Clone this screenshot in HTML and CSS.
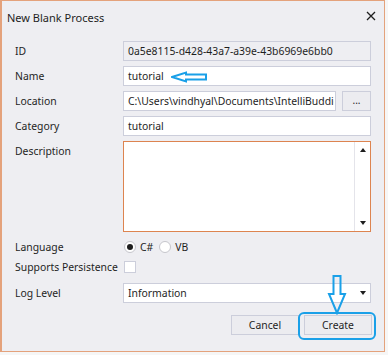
FILE: index.html
```html
<!DOCTYPE html>
<html>
<head>
<meta charset="utf-8">
<link rel="stylesheet" href="styles.css">
</head>
<body>
<div class="window">
  <div class="titlebar">
    <span class="title">New Blank Process</span>
    <svg class="close" width="10" height="10" viewBox="0 0 10 10"><path d="M1 1 L9 9 M9 1 L1 9" stroke="#1e1e1e" stroke-width="1.3"/></svg>
  </div>
  <div class="form">
    <label class="lbl">ID</label>
    <div class="field readonly">0a5e8115-d428-43a7-a39e-43b6969e6bb0</div>

    <label class="lbl">Name</label>
    <div class="field">tutorial</div>

    <label class="lbl">Location</label>
    <div class="loc">
      <div class="field grow"><span class="clip">C:\Users\vindhyal\Documents\IntelliBuddies</span></div>
      <div class="browse">...</div>
    </div>

    <label class="lbl">Category</label>
    <div class="field">tutorial</div>

    <label class="lbl top">Description</label>
    <div class="desc">
      <div class="desc-body"></div>
      <div class="scroll">
        <span class="tri up"></span>
        <span class="tri down"></span>
      </div>
    </div>

    <label class="lbl">Language</label>
    <div class="radios">
      <span class="radio checked"></span><span class="rtext">C#</span>
      <span class="radio"></span><span class="rtext">VB</span>
    </div>

    <label class="lbl persist">Supports Persistence</label>
    <div class="checkrow"><span class="check"></span></div>

    <label class="lbl">Log Level</label>
    <div class="field select">Information<span class="tri down sel"></span></div>
  </div>
  <div class="buttons">
    <div class="btn">Cancel</div>
    <div class="btn">Create</div>
  </div>

  <svg class="anno name-arrow" width="40" height="12" viewBox="0 0 40 12">
    <path d="M1 6 L15 1.5 L15 3.5 L35 3.5 L35 8.5 L15 8.5 L15 10.5 Z" fill="none" stroke="#1aa0e8" stroke-width="2" stroke-linejoin="miter"/>
  </svg>
  <svg class="anno create-arrow" width="20" height="40" viewBox="0 0 20 40">
    <path d="M6.5 1 L13.5 1 L13.5 19 L18 19 L10 38 L2 19 L6.5 19 Z" fill="none" stroke="#1aa0e8" stroke-width="2"/>
  </svg>
  <div class="anno create-ring"></div>
</div>
</body>
</html>
```

FILE: styles.css
```css
html, body {
  margin: 0;
  padding: 0;
  background: #f6f6f6;
}
body {
  font-family: "Noto Sans", "Open Sans", sans-serif;
  font-size: 10.4px;
  color: #1e1e1e;
}
.window {
  position: relative;
  width: 382px;
  height: 350px;
  border: 1px solid #e4a27c;
  border-left-width: 2px;
  background: #eeeef2;
  box-sizing: content-box;
}
.titlebar {
  height: 40px;
  display: flex;
  justify-content: space-between;
  align-items: flex-start;
  padding: 10px 8px 0 5px;
  box-sizing: border-box;
}
.title {
  font-size: 11px;
  line-height: 14px;
}
.form {
  display: grid;
  grid-template-columns: 108px 248px;
  grid-template-rows: 20px 20px 20px 20px 91px 20px 16px 20px;
  row-gap: 5px;
  padding-left: 13px;
}
.lbl {
  display: flex;
  align-items: center;
  white-space: nowrap;
}
.lbl.top {
  align-items: flex-start;
  padding-top: 3px;
}
.lbl.persist {
  align-items: flex-start;
  margin-top: -2px;
}
.field {
  background: #fff;
  border: 1px solid #cccedb;
  box-sizing: border-box;
  height: 20px;
  padding: 0 4px;
  display: flex;
  align-items: center;
  white-space: nowrap;
  overflow: hidden;
}
.clip {
  display: block;
  overflow: hidden;
  white-space: nowrap;
  width: 100%;
}
.field.readonly {
  background: #eeeef2;
}
.loc {
  display: flex;
  gap: 6px;
}
.grow {
  flex: 1;
  min-width: 0;
  padding-right: 1px;
}
.browse {
  width: 29px;
  height: 20px;
  box-sizing: border-box;
  border: 1px solid #cccedb;
  background: #ececf0;
  display: flex;
  justify-content: center;
  align-items: center;
  font-size: 10px;
  line-height: 1;
  padding-bottom: 2px;
}
.desc {
  display: flex;
  border: 1px solid #dd8450;
  background: #fff;
  box-sizing: border-box;
}
.desc-body {
  flex: 1;
}
.scroll {
  width: 15px;
  border-left: 1px solid #e4e4ea;
  display: flex;
  flex-direction: column;
  justify-content: space-between;
  align-items: center;
  padding: 6px 0 6px;
}
.tri {
  width: 0;
  height: 0;
  border-left: 3.5px solid transparent;
  border-right: 3.5px solid transparent;
}
.tri.up {
  border-bottom: 4px solid #1e1e1e;
}
.tri.down {
  border-top: 4px solid #1e1e1e;
}
.radios {
  display: flex;
  align-items: center;
  padding-left: 1px;
}
.radio {
  width: 12px;
  height: 12px;
  border: 1px solid #c6c6cc;
  border-radius: 50%;
  background: #fff;
  box-sizing: border-box;
  display: flex;
  align-items: center;
  justify-content: center;
}
.radio.checked::after {
  content: "";
  width: 6px;
  height: 6px;
  border-radius: 50%;
  background: #1e1e1e;
}
.rtext {
  margin: 0 6px 0 4px;
}
.checkrow {
  display: flex;
  align-items: flex-start;
  padding-left: 1px;
  margin-top: -1px;
}
.check {
  width: 12px;
  height: 12px;
  border: 1px solid #cccedb;
  background: #fff;
  box-sizing: border-box;
}
.select {
  justify-content: space-between;
  padding-right: 4px;
}
.tri.sel {
  border-left-width: 3px;
  border-right-width: 3px;
}
.buttons {
  display: flex;
  justify-content: flex-end;
  gap: 5px;
  margin-top: 12px;
  padding-right: 12px;
}
.btn {
  width: 68px;
  height: 20px;
  box-sizing: border-box;
  border: 1px solid #cccedb;
  background: #ececf0;
  display: flex;
  align-items: center;
  justify-content: center;
}
.anno {
  position: absolute;
}
.name-arrow {
  left: 169px;
  top: 70px;
}
.create-arrow {
  left: 325px;
  top: 274px;
}
.create-ring {
  left: 296px;
  top: 311px;
  width: 74px;
  height: 24px;
  border: 2px solid #1aa0e8;
  border-radius: 6px;
}
```
